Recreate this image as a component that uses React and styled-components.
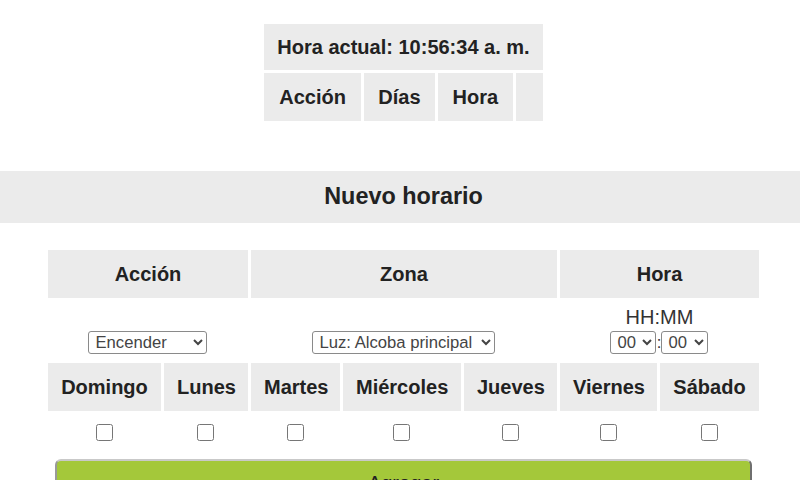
import React from "react"
import styled, { createGlobalStyle } from "styled-components"

const GlobalStyle = createGlobalStyle`
  html, body {
    margin: 0;
    padding: 0;
    background: #fff;
    overflow: hidden;
  }
  body {
    font-family: "Liberation Sans", Arial, sans-serif;
    color: #222;
  }
`

const Page = styled.div`
  width: 807px;
  display: flex;
  flex-direction: column;
  align-items: center;
  padding-top: 21px;
`

const Table = styled.table`
  border-spacing: 3px;
  border-collapse: separate;
  margin-top: ${(p) => p.$top || 0}px;
  ${(p) => p.$fixed && `table-layout: fixed; width: ${p.$fixed}px;`}
`

const Head = styled.th`
  background: #ebebeb;
  font-size: 20px;
  font-weight: bold;
  line-height: ${(p) => p.$line || 24}px;
  padding: 12px 13px;
  text-align: center;
  white-space: nowrap;
`

const Band = styled.div`
  align-self: stretch;
  margin-top: 47px;
  background: #ebebeb;
  text-align: center;
  font-size: 23.4px;
  font-weight: bold;
  line-height: 27px;
  padding: 12px 0 13px;
`

const Cell = styled.td`
  text-align: center;
  vertical-align: bottom;
  padding: ${(p) => p.$pad || "4px 0 6px"};
`

const TimeBox = styled.div`
  display: flex;
  flex-direction: column;
  align-items: center;
  gap: 2px;
`

const TimeLabel = styled.div`
  font-size: 20px;
  line-height: 24px;
  color: #333;
`

const TimeRow = styled.div`
  display: flex;
  align-items: center;
`

const Colon = styled.span`
  font-size: 16.67px;
  width: 5px;
  text-align: center;
  color: #333;
`

const Select = styled.select`
  font-family: "Liberation Sans", Arial, sans-serif;
  font-size: 16.67px;
  color: #444;
  width: ${(p) => p.$w}px;
  height: 23px;
  padding: 0 2px;
  margin: 0;
  background: #fff;
  border: 1px solid #8a8a8a;
  border-radius: 3px;
`

const Check = styled.input.attrs({ type: "checkbox" })`
  width: 17px;
  height: 17px;
  display: block;
  margin: 0 auto;
`

const Button = styled.button`
  display: block;
  width: 100%;
  background: #a4c83a;
  border: 2px solid #6f6f6f;
  border-top-color: #c9c9c9;
  border-left-color: #9a9a9a;
  border-radius: 6px;
  font-family: "Liberation Sans", Arial, sans-serif;
  font-size: 20px;
  line-height: 23px;
  color: #222;
  padding: 11px 0 10px;
`

const days = ["Domingo", "Lunes", "Martes", "Miércoles", "Jueves", "Viernes", "Sábado"]
const dayWidths = [113, 84, 89, 118, 93, 97, 99]

const App = () => (
  <Page>
    <GlobalStyle />
    <Table>
      <tbody>
        <tr>
          <Head colSpan={4} $line={22}>Hora actual: 10:56:34 a. m.</Head>
        </tr>
        <tr>
          <Head>Acción</Head>
          <Head>Días</Head>
          <Head>Hora</Head>
          <Head></Head>
        </tr>
      </tbody>
    </Table>

    <Band>Nuevo horario</Band>

    <Table $top={24} $fixed={717}>
      <colgroup>
        {dayWidths.map((w, i) => (
          <col key={i} style={{ width: w }} />
        ))}
      </colgroup>
      <tbody>
        <tr>
          <Head colSpan={2}>Acción</Head>
          <Head colSpan={3}>Zona</Head>
          <Head colSpan={2}>Hora</Head>
        </tr>
        <tr>
          <Cell colSpan={2}>
            <Select $w={119} defaultValue="on">
              <option value="on">Encender</option>
              <option value="off">Apagar</option>
            </Select>
          </Cell>
          <Cell colSpan={3}>
            <Select $w={183} defaultValue="alcoba">
              <option value="alcoba">Luz: Alcoba principal</option>
            </Select>
          </Cell>
          <Cell colSpan={2}>
            <TimeBox>
              <TimeLabel>HH:MM</TimeLabel>
              <TimeRow>
                <Select $w={46}>
                  <option>00</option>
                </Select>
                <Colon>:</Colon>
                <Select $w={47}>
                  <option>00</option>
                </Select>
              </TimeRow>
            </TimeBox>
          </Cell>
        </tr>
        <tr>
          {days.map((d) => (
            <Head key={d}>{d}</Head>
          ))}
        </tr>
        <tr>
          {days.map((d) => (
            <Cell key={d} $pad="10px 0 9px">
              <Check />
            </Cell>
          ))}
        </tr>
        <tr>
          <Cell colSpan={7} $pad="6px 7px 0">
            <Button>Agregar</Button>
          </Cell>
        </tr>
      </tbody>
    </Table>
  </Page>
)

export default App
